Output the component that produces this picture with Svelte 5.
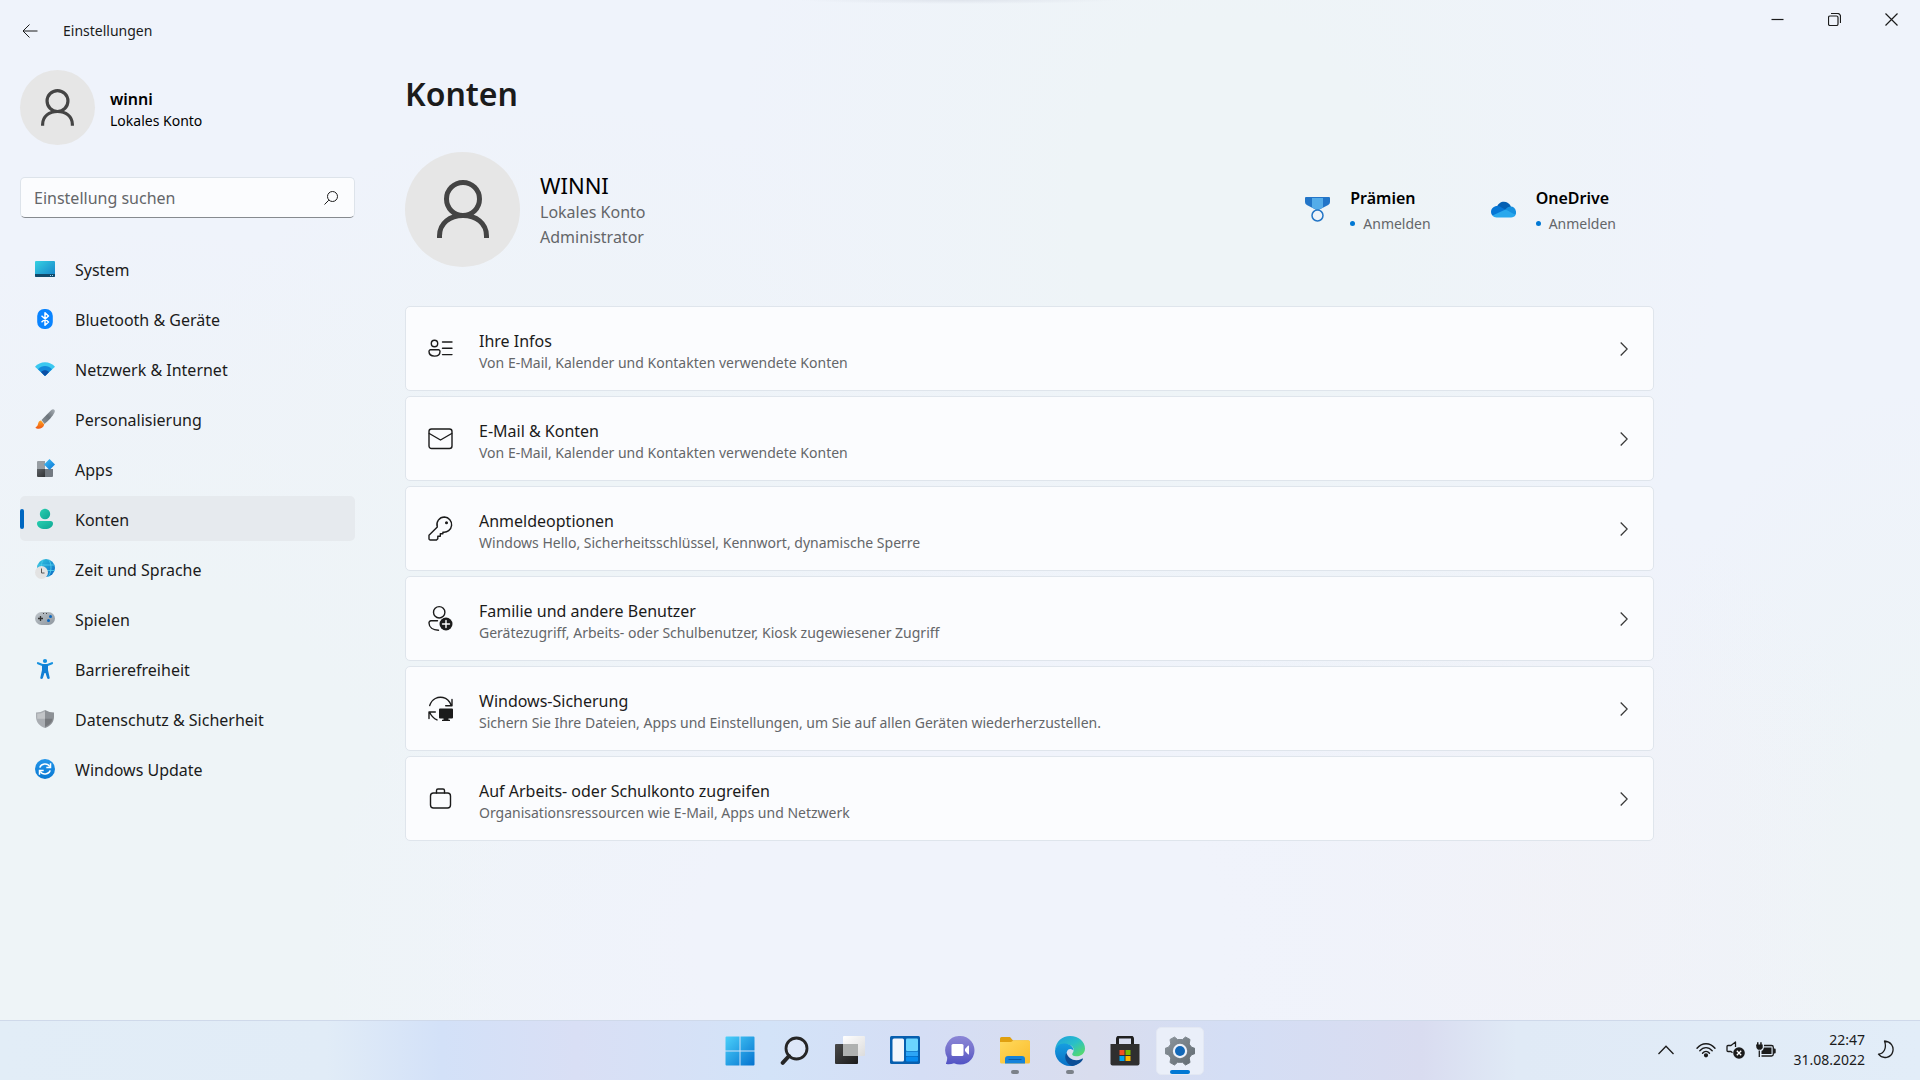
<script>
  let selected = $state('Konten');
  let query = $state('');

  const nav = [
    'System',
    'Bluetooth & Geräte',
    'Netzwerk & Internet',
    'Personalisierung',
    'Apps',
    'Konten',
    'Zeit und Sprache',
    'Spielen',
    'Barrierefreiheit',
    'Datenschutz & Sicherheit',
    'Windows Update'
  ];

  const cards = [
    { icon: 'info', title: 'Ihre Infos', text: 'Von E-Mail, Kalender und Kontakten verwendete Konten' },
    { icon: 'mail', title: 'E-Mail & Konten', text: 'Von E-Mail, Kalender und Kontakten verwendete Konten' },
    { icon: 'key', title: 'Anmeldeoptionen', text: 'Windows Hello, Sicherheitsschlüssel, Kennwort, dynamische Sperre' },
    { icon: 'family', title: 'Familie und andere Benutzer', text: 'Gerätezugriff, Arbeits- oder Schulbenutzer, Kiosk zugewiesener Zugriff' },
    { icon: 'backup', title: 'Windows-Sicherung', text: 'Sichern Sie Ihre Dateien, Apps und Einstellungen, um Sie auf allen Geräten wiederherzustellen.' },
    { icon: 'work', title: 'Auf Arbeits- oder Schulkonto zugreifen', text: 'Organisationsressourcen wie E-Mail, Apps und Netzwerk' }
  ];

  const apps = [
    { id: 'start', label: 'Start' },
    { id: 'search', label: 'Suchen' },
    { id: 'tasks', label: 'Aktive Anwendungen' },
    { id: 'widgets', label: 'Widgets' },
    { id: 'chat', label: 'Chat' },
    { id: 'explorer', label: 'Explorer', running: true },
    { id: 'edge', label: 'Microsoft Edge', running: true },
    { id: 'store', label: 'Microsoft Store' },
    { id: 'settings', label: 'Einstellungen', active: true }
  ];
</script>

{#snippet person()}
  <svg class="person" viewBox="0 0 52 60" fill="none" stroke="#444" stroke-width="5" aria-hidden="true">
    <circle cx="26" cy="19" r="16.5" />
    <path d="M2.500 58V56C2.500 43 13 35.500 26 35.500S49.500 43 49.500 56V58" />
  </svg>
{/snippet}

{#snippet navIcon(name)}
  <svg class="nav-icon" viewBox="0 0 20 20" aria-hidden="true">
    {#if name === 'System'}
      <defs><linearGradient id="sys" x1="0" y1="0" x2="1" y2="1"><stop offset="0" stop-color="#36d1e2" /><stop offset="1" stop-color="#1580c8" /></linearGradient></defs>
      <rect y="2" width="20" height="16" rx="1" fill="url(#sys)" />
      <path d="M0 15H20V17a1 1 0 0 1-1 1H1a1 1 0 0 1-1-1Z" fill="#10496b" />
      <path d="M15 16h1v1h-1zM17 16h1v1h-1z" fill="#9ed7ee" />
    {:else if name === 'Bluetooth & Geräte'}
      <rect x="2.200" width="15.600" height="20" rx="7" fill="#0a84ff" />
      <path d="M6.500 6.800l7 6.200-3.500 3.200V3.800L13.500 7l-7 6.200" fill="none" stroke="#fff" stroke-width="1.500" stroke-linejoin="round" />
    {:else if name === 'Netzwerk & Internet'}
      <path d="M0 7.800C5 1.700 15 1.700 20 7.800L10 17Z" fill="#3bc8f0" />
      <path d="M3 10.200c4-4.300 10-4.300 14 0L10 17Z" fill="#1489da" />
      <path d="M6 13c2.500-2.300 5.500-2.300 8 0l-3.300 3.500q-.7.600-1.400 0Z" fill="#0b4fa5" />
    {:else if name === 'Personalisierung'}
      <defs>
        <linearGradient id="handle" x1="0" y1="1" x2="1" y2="0"><stop offset="0" stop-color="#8c9399" /><stop offset=".5" stop-color="#6c747b" /><stop offset="1" stop-color="#a9b0b6" /></linearGradient>
        <linearGradient id="bristle" x1="0" y1="0" x2="0" y2="1"><stop offset="0" stop-color="#ffa31b" /><stop offset="1" stop-color="#ee5717" /></linearGradient>
      </defs>
      <path d="M6.500 11L16.300 1C18 -.5 20.500.5 19.700 3 18 7 13 12 9.500 15Z" fill="url(#handle)" />
      <path d="M6 11.500c-3 .5-2.500 3-3.500 5-.5 1.200-2 1.600-2 2.200C2 20.500 8 20.500 9.300 15.500Z" fill="url(#bristle)" />
    {:else if name === 'Apps'}
      <defs>
        <linearGradient id="tileDark" x1="0" y1="0" x2="1" y2="1"><stop offset="0" stop-color="#5e6266" /><stop offset="1" stop-color="#303234" /></linearGradient>
        <linearGradient id="tileBlue" x1="0" y1="0" x2="1" y2="1"><stop offset="0" stop-color="#41bff5" /><stop offset="1" stop-color="#0875d5" /></linearGradient>
      </defs>
      <path d="M2 3a1 1 0 0 1 1-1h7v8H2Z" fill="#989ea3" />
      <path d="M2 10h8v8H3a1 1 0 0 1-1-1Z" fill="url(#tileDark)" />
      <path d="M10 10h8v7a1 1 0 0 1-1 1h-7Z" fill="#737a81" />
      <path d="M14.500 0l5.500 5.500-5.500 5.500L9 5.500Z" fill="url(#tileBlue)" />
    {:else if name === 'Konten'}
      <defs><linearGradient id="acc" x1="0" y1="0" x2="1" y2="1"><stop offset="0" stop-color="#27cfb0" /><stop offset="1" stop-color="#0fa593" /></linearGradient></defs>
      <circle cx="10" cy="5" r="5.200" fill="url(#acc)" />
      <path d="M4.500 12h11a2.500 2.500 0 0 1 2.500 2.500c0 3.500-3.500 5.500-8 5.500s-8-2-8-5.500A2.500 2.500 0 0 1 4.500 12Z" fill="url(#acc)" />
    {:else if name === 'Zeit und Sprache'}
      <defs><linearGradient id="globe" x1="0" y1="0" x2="1" y2="1"><stop offset="0" stop-color="#33c9e0" /><stop offset="1" stop-color="#0a68c4" /></linearGradient></defs>
      <circle cx="11" cy="9" r="9" fill="url(#globe)" />
      <path d="M3 6h16M3 11.500h17M8 1C5.500 5 6 13 9 18M14 1c3 5 2.500 12-1 17" fill="none" stroke="#53d1ef" stroke-width=".8" />
      <circle cx="6.500" cy="13.500" r="6.500" fill="#e3e3e3" />
      <path d="M6.500 9.500V14H9.500" fill="none" stroke="#555" />
    {:else if name === 'Spielen'}
      <defs><linearGradient id="pad" x1="0" y1="0" x2="1" y2="1"><stop offset="0" stop-color="#bfc6cb" /><stop offset="1" stop-color="#8e969e" /></linearGradient></defs>
      <rect y="3" width="20" height="13" rx="6.500" fill="url(#pad)" />
      <path d="M5.500 7v5M3 9.500h5" stroke="#333" stroke-width="1.300" />
      <path d="M8 4.500h1M11 4.500h1" stroke="#444" />
      <circle cx="15.500" cy="7.500" r="1.500" fill="#0967bf" /><circle cx="13.500" cy="11.500" r="1.500" fill="#0967bf" />
    {:else if name === 'Barrierefreiheit'}
      <circle cx="10" cy="2" r="2.100" fill="#1590df" />
      <path d="M3 4.200L7.500 6h5L17 4.200M10 6v7" fill="none" stroke="#1590df" stroke-width="2.200" stroke-linecap="round" stroke-linejoin="round" />
      <path d="M7 5.500h6v5.500l1.800 8.200q-1.500 1.500-2.600 0L10.500 14h-1l-1.700 5.200q-1.100 1.500-2.600 0L7 11Z" fill="#117fd4" />
    {:else if name === 'Datenschutz & Sicherheit'}
      <path d="M10 1q4.500 2.600 9 2.600V8c0 5-3.500 9-9 11Z" fill="#8d9196" />
      <path d="M10 1Q5.500 3.600 1 3.600V8c0 5 3.500 9 9 11Z" fill="#a9adb2" />
      <path d="M10 2.500Q6 4.700 2.200 4.700V9.800H10Z" fill="#c2c5c8" />
      <path d="M10 9.800h7.600c-.7 3.700-3.600 6.400-7.600 8Z" fill="#76797d" />
    {:else}
      <defs><linearGradient id="upd" x1="0" y1="0" x2="0" y2="1"><stop offset="0" stop-color="#2496ea" /><stop offset="1" stop-color="#0878d2" /></linearGradient></defs>
      <circle cx="10" cy="10" r="10" fill="url(#upd)" />
      <path d="M4.800 8.600C6 4.300 12.500 3.700 14.800 7.600M15.200 11.400C14 15.700 7.500 16.300 5.200 12.400" fill="none" stroke="#fff" stroke-width="1.500" />
      <path d="M15.500 4.300V8.500H11.300M4.500 15.700V11.500H8.700" fill="none" stroke="#fff" stroke-width="1.500" />
    {/if}
  </svg>
{/snippet}

{#snippet cardIcon(name)}
  <svg class="card-icon" viewBox="0 0 25 25" fill="none" stroke="#1b1b1b" stroke-width="1.400" stroke-linejoin="round" stroke-linecap="round" aria-hidden="true">
    {#if name === 'info'}
      <circle cx="6.500" cy="7.500" r="3.200" />
      <path d="M2.500 13.800h8a1.600 1.600 0 0 1 1.500 1.700c0 2.800-2.300 4.600-5.500 4.600S1 18.300 1 15.500a1.600 1.600 0 0 1 1.500-1.700ZM14.500 6h9.500M14.500 12.300h9.500M14.500 18.600h9.500" />
    {:else if name === 'mail'}
      <rect x="1" y="3" width="23" height="19.500" rx="2.500" />
      <path d="M1.300 7.500L12.500 14 23.700 7.500" />
    {:else if name === 'key'}
      <path d="M16.500 1a7.600 7.600 0 1 1-1.600 15.100v1.700h-2.600v2.500h-2.500v2.400L8.500 24H2.300A1.300 1.300 0 0 1 1 22.700v-3.400L9.300 11A7.600 7.600 0 0 1 16.500 1Z" />
      <circle cx="18.500" cy="6.700" r=".8" fill="#1b1b1b" />
    {:else if name === 'family'}
      <circle cx="11.200" cy="6.300" r="5.700" />
      <path d="M9.500 14.800H3A2 2 0 0 0 1 17c0 4.200 4 7 9.500 7.300" />
      <circle cx="18" cy="18" r="6.500" fill="#1b1b1b" stroke="none" />
      <path d="M18 14.500v7M14.500 18h7" stroke="#fff" />
    {:else if name === 'backup'}
      <path d="M1.700 9.500C4 2.500 10 .5 15 1.500c3.700.8 6.700 4 8 7.500M24 3.500V9.800H17.700M1 22.500V16H7.300M1.700 16.500c1.800 3.800 4 6 7.300 7.400" />
      <path d="M12 12.500h12a1 1 0 0 1 1 1v8a1 1 0 0 1-1 1h-3.500v1.300H22V25h-8v-1.200h1.500v-1.300H12a1 1 0 0 1-1-1v-8a1 1 0 0 1 1-1Z" fill="#1b1b1b" stroke="none" />
    {:else}
      <rect x="2.500" y="7" width="20" height="15" rx="3" />
      <path d="M8.500 7V4.500A1.500 1.500 0 0 1 10 3h5a1.500 1.500 0 0 1 1.500 1.500V7" />
    {/if}
  </svg>
{/snippet}

{#snippet appIcon(id)}
  <svg class="app-icon" viewBox="0 0 30 30" aria-hidden="true">
    {#if id === 'start'}
      <defs><linearGradient id="win" x1="0" y1="0" x2="1" y2="1"><stop offset="0" stop-color="#4bd0fa" /><stop offset="1" stop-color="#0472cf" /></linearGradient></defs>
      <path d="M1.500 .5H14.500V14.500H.5V1.500a1 1 0 0 1 1-1ZM15.500 .5H28.500a1 1 0 0 1 1 1V14.500h-14ZM.5 15.500h14v14H1.500a1 1 0 0 1-1-1ZM15.500 15.500h14v13a1 1 0 0 1-1 1h-13Z" fill="url(#win)" />
    {:else if id === 'search'}
      <circle cx="16.500" cy="12.500" r="10.500" fill="#e4ebf9" fill-opacity=".6" stroke="#262626" stroke-width="2.800" />
      <path d="M9 20L2.700 26.800" stroke="#262626" stroke-width="4" stroke-linecap="round" />
    {:else if id === 'tasks'}
      <defs>
        <linearGradient id="paneDark" x1="0" y1="0" x2="1" y2="1"><stop offset="0" stop-color="#4a4a4a" /><stop offset="1" stop-color="#1b1b1b" /></linearGradient>
        <linearGradient id="paneLight" x1="0" y1="0" x2="1" y2="1"><stop offset="0" stop-color="#fff" /><stop offset="1" stop-color="#dcdcdc" /></linearGradient>
      </defs>
      <rect x="0" y="8" width="23" height="20" rx="1" fill="url(#paneDark)" />
      <rect x="8" y="0" width="22" height="20" rx="1" fill="url(#paneLight)" />
      <path d="M8 8H23V20H9a1 1 0 0 1-1-1Z" fill="#afb1b0" />
    {:else if id === 'widgets'}
      <rect width="30" height="28" rx="1.500" fill="#075faf" />
      <rect x="2.500" y="2.500" width="11.500" height="23" rx="1.500" fill="#f2f5fb" />
      <rect x="16" y="2.500" width="12" height="12.500" rx="1" fill="#6bd5ff" />
      <rect x="16" y="15.500" width="12" height="4.500" fill="#2da5f6" />
      <rect x="16" y="20.500" width="12" height="5" rx="1" fill="#078bef" />
    {:else if id === 'chat'}
      <defs><linearGradient id="bubble" x1="0" y1="0" x2="0" y2="1"><stop offset="0" stop-color="#8b86d6" /><stop offset=".5" stop-color="#7471cc" /><stop offset="1" stop-color="#5052c4" /></linearGradient></defs>
      <path d="M15 0A14.300 14.300 0 1 1 9 27.200Q5 28.700 1.500 28 .5 27.700 1.300 26.500 2.300 24.500 2.200 21.500A14.300 14.300 0 0 1 15 0Z" fill="url(#bubble)" />
      <rect x="6.500" y="8" width="12" height="12" rx="1.500" fill="#fff" />
      <path d="M20 13l3-3.300q1-.8 1 .5v7.500q0 1.300-1 .5L20 15Z" fill="#fff" />
    {:else if id === 'explorer'}
      <defs><linearGradient id="folder" x1="0" y1="0" x2="1" y2="1"><stop offset="0" stop-color="#ffd95c" /><stop offset="1" stop-color="#fbbd2d" /></linearGradient></defs>
      <path d="M1.500 1H10l3 3.500H28a2 2 0 0 1 2 2V12H0V2.500A1.500 1.500 0 0 1 1.500 1Z" fill="#e0a010" />
      <path d="M0 6H11L14 4.300H28.500A1.500 1.500 0 0 1 30 5.800V26a1.500 1.500 0 0 1-1.500 1.500h-27A1.500 1.500 0 0 1 0 26Z" fill="url(#folder)" />
      <path d="M5 27.500V23a3 3 0 0 1 3-3H22a3 3 0 0 1 3 3v4.500Z" fill="#1583da" />
      <path d="M8.500 23.500h13" stroke="#0a5ba5" />
    {:else if id === 'edge'}
      <defs>
        <linearGradient id="edgeTop" x1="0" y1="0" x2="1" y2="1"><stop offset="0" stop-color="#1e9de1" /><stop offset=".5" stop-color="#29bfc8" /><stop offset="1" stop-color="#61df58" /></linearGradient>
        <linearGradient id="edgeLow" x1="0" y1="0" x2="0" y2="1"><stop offset="0" stop-color="#169ee0" /><stop offset="1" stop-color="#0870c6" /></linearGradient>
      </defs>
      <path d="M0 14C1 5.500 7 0 15 0c9 0 15 6 15 12.500 0 5-4 8-9 7.800-3.300-.2-4.500-1.500-3.500-3 2.500-3.500 1-7.800-4.500-8.800C8 7.500 2 9 0 14Z" fill="url(#edgeTop)" />
      <path d="M0 15C.5 10 5 7 10 7.500c5 .4 8.500 3 8.500 7-3-3-7-1.500-7 3.500 0 6 7 10 15 6C23.500 28.500 19 30 15 30 6.500 30 0 23 0 15Z" fill="url(#edgeLow)" />
      <path d="M11.500 17C8.500 21 11 28 17 29.900 21.500 29.500 26 27 27.800 23.500 28.200 22.500 27.500 22.300 26.500 22.900 20 26 13.500 23 11.500 17Z" fill="#0c4e96" />
    {:else if id === 'store'}
      <path d="M7.500 8V2.700A1.700 1.700 0 0 1 9.200 1H20.800a1.700 1.700 0 0 1 1.700 1.700V8" fill="none" stroke="#202020" stroke-width="3" />
      <path d="M.5 8H29.500V27.500a2 2 0 0 1-2 2H2.500a2 2 0 0 1-2-2Z" fill="#2f2f2f" />
      <path d="M9.500 14h5v5h-5z" fill="#f25022" /><path d="M15.500 14h5v5h-5z" fill="#7fba00" />
      <path d="M9.500 20h5v5h-5z" fill="#00a4ef" /><path d="M15.500 20h5v5h-5z" fill="#ffb900" />
    {:else}
      <defs><linearGradient id="gear" x1="0" y1="0" x2="1" y2="1"><stop offset="0" stop-color="#8d969d" /><stop offset="1" stop-color="#606970" /></linearGradient></defs>
      <path d="M12.500 3.500L9.500 1 5 3.500 5.800 8 3.700 11 0 12.500v5L3.700 19l2.100 3L5 26.500 9.500 29l3-2.700h5l3 2.700 4.500-2.500-.8-4.500 2.100-3 3.700-1.500v-5L26.300 11l-2.100-3 .8-4.500L20.500 1l-3 2.500Z" fill="url(#gear)" stroke="url(#gear)" stroke-linejoin="round" />
      <circle cx="15" cy="15" r="7.200" fill="#edf1f9" />
      <circle cx="15" cy="15" r="5" fill="#1268b8" />
    {/if}
  </svg>
{/snippet}

<div class="screen">
  <div class="window">
    <header class="titlebar">
      <button class="back" aria-label="Zurück">
        <svg viewBox="0 0 16 14" width="16" height="14" fill="none" stroke="#1b1b1b"><path d="M7.500 .5L1 7l6.500 6.500M1 7H15.500" /></svg>
      </button>
      <span class="window-title">Einstellungen</span>
      <div class="window-buttons">
        <button aria-label="Minimieren"><svg viewBox="0 0 13 13"><path d="M.5 6.500h12" /></svg></button>
        <button aria-label="Verkleinern"><svg viewBox="0 0 13 13"><rect x=".5" y="3" width="9.500" height="9.500" rx="1.500" /><path d="M3 .5h6.500a3 3 0 0 1 3 3V10" /></svg></button>
        <button aria-label="Schließen"><svg viewBox="0 0 13 13"><path d="M.5.5l12 12M12.500.5l-12 12" /></svg></button>
      </div>
    </header>

    <div class="body">
      <aside class="sidebar">
        <div class="user">
          <span class="avatar">{@render person()}</span>
          <div class="user-text">
            <strong>winni</strong>
            <span>Lokales Konto</span>
          </div>
        </div>

        <label class="search">
          <input type="text" placeholder="Einstellung suchen" aria-label="Einstellung suchen" bind:value={query} />
          <svg viewBox="0 0 14 14" width="14" height="14" fill="none" stroke="#1b1b1b" aria-hidden="true"><circle cx="8.500" cy="5.500" r="5" /><path d="M4.800 9.200L.5 13.500" /></svg>
        </label>

        <nav>
          {#each nav as name}
            <a href="#{name}" class:selected={name === selected} onclick={() => (selected = name)}>
              {@render navIcon(name)}
              <span>{name}</span>
            </a>
          {/each}
        </nav>
      </aside>

      <main>
        <h1>Konten</h1>

        <section class="profile">
          <span class="avatar large">{@render person()}</span>
          <div class="profile-text">
            <h2>WINNI</h2>
            <span>Lokales Konto</span>
            <span>Administrator</span>
          </div>
          <div class="services">
            <a class="service" href="#praemien">
              <svg viewBox="0 0 25 25" aria-hidden="true">
                <path d="M1 0H24a1 1 0 0 1 1 1V5q0 2-1.800 3L12.500 13.500 1.800 8Q0 7 0 5V1a1 1 0 0 1 1-1Z" fill="#2275c8" />
                <path d="M7 1h11v9.500l-5.500 2.800L7 10.500Z" fill="#54ace9" />
                <circle cx="12.500" cy="18.500" r="5.500" fill="#eef3f9" stroke="#2375c6" stroke-width="1.500" />
              </svg>
              <span class="service-text"><strong>Prämien</strong><span class="status">Anmelden</span></span>
            </a>
            <a class="service" href="#onedrive">
              <svg viewBox="0 0 25 25" aria-hidden="true">
                <path d="M6 10C7.500 3.500 17 2.500 20 9.500L15 14Z" fill="#0560b3" />
                <path d="M5 20A5 5 0 0 1 0 15C0 10 6 7 10.500 10.500L17 14 5 20Z" fill="#0676d5" />
                <path d="M14.500 12.500C17 8.500 24 8 25 14.500q.5 3-2 5Z" fill="#1690df" />
                <path d="M1.500 18.500L14.500 12.500 24.300 17.800Q23.300 20.500 20 20.500H5.500Q3 20.500 1.500 18.500Z" fill="#29a8ed" />
              </svg>
              <span class="service-text"><strong>OneDrive</strong><span class="status">Anmelden</span></span>
            </a>
          </div>
        </section>

        <div class="cards">
          {#each cards as card}
            <button class="card">
              {@render cardIcon(card.icon)}
              <span class="card-text">
                <span class="card-title">{card.title}</span>
                <span class="card-note">{card.text}</span>
              </span>
              <svg class="chevron" viewBox="0 0 8 14" fill="none" stroke="#3a3a3a" stroke-width="1.300" aria-hidden="true"><path d="M.7.5L7.200 7 .7 13.500" /></svg>
            </button>
          {/each}
        </div>
      </main>
    </div>
  </div>

  <footer class="taskbar">
    <div class="apps">
      {#each apps as app}
        <button class="app" class:active={app.active} class:running={app.running} aria-label={app.label}>
          {@render appIcon(app.id)}
        </button>
      {/each}
    </div>
    <div class="tray">
      <button class="overflow" aria-label="Ausgeblendete Symbole">
        <svg viewBox="0 0 16 10" width="16" height="10" fill="none" stroke="#1b1b1b" stroke-width="1.300"><path d="M.5 9L8 1.300 15.500 9" /></svg>
      </button>
      <button class="status-icons" aria-label="WLAN, Lautstärke, Akku">
        <svg viewBox="0 0 20 16" width="20" height="16" fill="none" stroke="#1b1b1b" stroke-width="1.400" stroke-linecap="round"><path d="M1 6.200C6 .2 14 .2 19 6.200M3.800 8.800C7.500 4.500 12.500 4.500 16.200 8.800M6.500 11.200C8.500 8.800 11.500 8.800 13.500 11.200" /><circle cx="10" cy="13.300" r="1.400" fill="#1b1b1b" /></svg>
        <svg viewBox="0 0 20 18" width="20" height="18" fill="none" stroke="#1b1b1b" stroke-width="1.300" stroke-linejoin="round"><path d="M9.500 6V1L5 4.500H2a1 1 0 0 0-1 1v4a1 1 0 0 0 1 1h3l1.500 1.300" /><circle cx="13" cy="12" r="5.800" fill="#1b1b1b" stroke="none" /><path d="M10.800 9.800l4.400 4.400M15.200 9.800l-4.400 4.400" stroke="#fff" /></svg>
        <svg viewBox="0 0 20 16" width="20" height="16" fill="none" stroke="#1b1b1b" stroke-width="1.300"><path d="M8 3.500h7.500a1.800 1.800 0 0 1 1.800 1.800v6.900a1.800 1.800 0 0 1-1.800 1.800H5.500M3.300 8.500V15" /><path d="M8 5.500h7.500v6.500H5.500V9L7 8ZM17.500 6.500h1.200a1 1 0 0 1 1 1v3a1 1 0 0 1-1 1h-1.200ZM0 2.500h1V.3h1.500v2.200h1.700V.3h1.500v2.200h1V6L5 7.800H2L.5 6Z" fill="#1b1b1b" stroke="none" /></svg>
      </button>
      <button class="clock"><span>22:47</span><span>31.08.2022</span></button>
      <button class="focus" aria-label="Benachrichtigungen">
        <svg viewBox="0 0 18 19" width="18" height="19" fill="none" stroke="#1b1b1b" stroke-width="1.300" stroke-linejoin="round"><path d="M7.500 1C14 1.500 17 6.500 15.800 11.500 14.500 17.500 6 20 1.500 14.200 7 13.500 10 8 7.500 1Z" /></svg>
      </button>
    </div>
  </footer>
</div>

<style>
  :global(body) { margin: 0; }
  .screen, .screen * { box-sizing: border-box; }
  .screen {
    min-height: 100vh;
    display: flex;
    flex-direction: column;
    font-family: "Noto Sans", "Open Sans", sans-serif;
    font-size: 16px;
    line-height: 24px;
    color: #1b1b1b;
  }
  button {
    font: inherit;
    color: inherit;
    background: none;
    border: 0;
    padding: 0;
    margin: 0;
  }
  a { color: inherit; text-decoration: none; }
  svg { display: block; flex: none; }
  h1, h2 { margin: 0; }

  .window {
    flex: 1;
    background:
      radial-gradient(ellipse 160px 4px at 50% 0, #dfe4ec, transparent),
      radial-gradient(ellipse 34% 45% at 50% 92%, #f0f3fb 40%, transparent),
      radial-gradient(ellipse 26% 70% at 8% 92%, #eef4f7 50%, transparent),
      radial-gradient(ellipse 26% 60% at 64% 20%, #eef4f7 30%, transparent),
      radial-gradient(ellipse 24% 50% at 30% 60%, #eef4f7 30%, transparent),
      radial-gradient(ellipse 20% 40% at 80% 88%, #f1f2f7, transparent),
      radial-gradient(ellipse 16% 50% at 100% 88%, #eef4f7 30%, transparent),
      #eff3fb;
  }

  .titlebar { display: flex; align-items: flex-start; height: 70px; }
  .back { width: 36px; height: 40px; margin: 11px 7px 0 12px; padding-left: 10px; }
  .window-title { font-size: 14px; line-height: 20px; margin: 21px auto 0 8px; }
  .window-buttons { display: flex; }
  .window-buttons button { width: 57px; height: 38px; display: grid; place-items: center; }
  .window-buttons svg { width: 13px; height: 13px; fill: none; stroke: #1b1b1b; stroke-width: 1.2px; }

  .body { display: flex; padding: 0 20px; gap: 50px; }

  .sidebar { width: 335px; flex: none; }
  .user { display: flex; align-items: center; gap: 15px; color: #000; }
  .avatar {
    width: 75px;
    height: 75px;
    flex: none;
    border-radius: 50%;
    background: #e6e6e6;
    display: grid;
    place-items: center;
  }
  .person { width: 33px; height: 38px; }
  .user-text { display: flex; flex-direction: column; font-size: 14px; line-height: 21px; padding-top: 4px; }
  .user-text strong { font-size: 16px; font-weight: 600; }

  .search {
    display: flex;
    align-items: center;
    margin-top: 32px;
    height: 41px;
    padding: 0 16px 0 13px;
    border: 1px solid #dde3ea;
    border-bottom-color: #868a8f;
    border-radius: 5px;
    background: #fbfcfe;
  }
  .search input {
    flex: 1;
    min-width: 0;
    border: 0;
    outline: 0;
    padding: 0;
    background: none;
    font: inherit;
    color: inherit;
  }
  .search input::placeholder { color: #646669; opacity: 1; }

  nav { display: flex; flex-direction: column; gap: 5px; margin-top: 28px; }
  nav a {
    position: relative;
    display: flex;
    align-items: center;
    gap: 20px;
    height: 45px;
    padding-left: 15px;
    border-radius: 5px;
  }
  nav a span { padding-top: 2px; }
  nav a.selected { background: #e6eaee; }
  nav a.selected::before {
    content: "";
    position: absolute;
    left: 0;
    top: 13px;
    width: 4px;
    height: 20px;
    border-radius: 2px;
    background: #0067c0;
  }
  .nav-icon { width: 20px; height: 20px; overflow: visible; }

  main { flex: 0 1 1249px; min-width: 0; }
  h1 { font-size: 32px; line-height: 48px; font-weight: 600; }
  .profile { display: flex; align-items: center; margin-top: 34px; }
  .avatar.large { width: 115px; height: 115px; margin-right: 20px; }
  .large .person { width: 52px; height: 60px; }
  .profile-text { display: flex; flex-direction: column; line-height: 25px; padding-top: 1px; color: #646669; }
  .profile-text h2 { font-size: 22px; line-height: 30px; font-weight: 400; color: #000; }
  .services { display: flex; gap: 60px; margin: 0 38px 0 auto; }
  .service { display: flex; align-items: center; gap: 20px; }
  .service svg { width: 25px; height: 25px; }
  .service-text { display: flex; flex-direction: column; line-height: 26px; padding-top: 2px; }
  .service-text strong { font-weight: 600; color: #000; }
  .status { display: flex; align-items: center; gap: 8px; font-size: 14px; color: #646669; }
  .status::before { content: ""; width: 5px; height: 5px; border-radius: 50%; background: #0078d4; }

  .cards { display: flex; flex-direction: column; gap: 5px; margin-top: 39px; }
  .card {
    display: flex;
    align-items: center;
    height: 85px;
    padding: 0 25px 0 22px;
    border: 1px solid #dfe5ec;
    border-radius: 5px;
    background: #fbfcfe;
    text-align: left;
  }
  .card-icon { width: 25px; height: 25px; overflow: visible; }
  .card-text { flex: 1; min-width: 0; margin-left: 26px; padding-top: 6px; display: flex; flex-direction: column; line-height: 21px; }
  .card-note { font-size: 14px; color: #646669; }
  .chevron { width: 8px; height: 14px; }

  .taskbar {
    display: grid;
    grid-template-columns: 1fr auto 1fr;
    height: 60px;
    border-top: 1px solid #cfd9ea;
    background: linear-gradient(90deg, #e2edf7 0, #e1ecf7 17%, #d3e1f8 23%, #d9dff5 30%, #d3e3f8 40%, #d5def5 48%, #d9ddee 57%, #d4def5 64%, #d9dcf0 74%, #e0eaf6 79%, #e2edf8 100%);
  }
  .apps { grid-column: 2; display: flex; align-items: center; gap: 7px; }
  .app {
    position: relative;
    width: 48px;
    height: 48px;
    display: grid;
    place-items: center;
    border-radius: 5px;
    border: 1px solid transparent;
  }
  .app.active { background: #eaeff9; border-color: #e3e8f3; }
  .app-icon { width: 30px; height: 30px; }
  .app.running::after, .app.active::after {
    content: "";
    position: absolute;
    bottom: 0;
    left: 50%;
    translate: -50% 0;
    width: 8px;
    height: 4px;
    border-radius: 2px;
    background: #7b8189;
  }
  .app.active::after { width: 20px; background: #0078d4; }

  .tray { display: flex; align-items: center; justify-content: flex-end; padding: 0 25px 2px 0; }
  .overflow { margin-right: 22px; }
  .status-icons { display: flex; align-items: center; gap: 10px; }
  .clock { display: flex; flex-direction: column; align-items: flex-end; margin: 0 12px 0 17px; font-size: 14px; line-height: 20px; }
</style>
